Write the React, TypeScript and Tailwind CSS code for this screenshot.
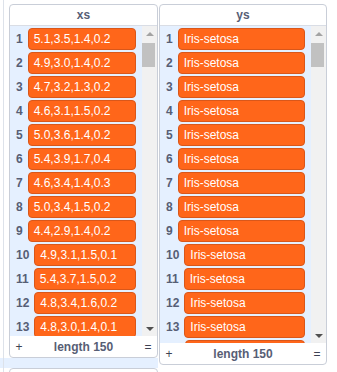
import React, { FC } from "react";

const xs = [
  "5.1,3.5,1.4,0.2",
  "4.9,3.0,1.4,0.2",
  "4.7,3.2,1.3,0.2",
  "4.6,3.1,1.5,0.2",
  "5.0,3.6,1.4,0.2",
  "5.4,3.9,1.7,0.4",
  "4.6,3.4,1.4,0.3",
  "5.0,3.4,1.5,0.2",
  "4.4,2.9,1.4,0.2",
  "4.9,3.1,1.5,0.1",
  "5.4,3.7,1.5,0.2",
  "4.8,3.4,1.6,0.2",
  "4.8,3.0,1.4,0.1",
];

const ys = Array.from({ length: 13 }, () => "Iris-setosa");

// Fake scrollbar, drawn to look like Chrome's classic one
const Scrollbar: FC = () => (
  <div className="w-[15px] shrink-0 bg-[#f1f1f1] flex flex-col">
    <div className="h-[15px] flex items-center justify-center">
      <div className="w-0 h-0 border-l-[4px] border-r-[4px] border-b-[4px] border-l-transparent border-r-transparent border-b-[#a3a3a3]" />
    </div>
    <div className="mt-[2px] w-[13px] h-[24px] bg-[#c1c1c1]" />
    <div className="flex-1" />
    <div className="h-[15px] flex items-center justify-center">
      <div className="w-0 h-0 border-l-[4px] border-r-[4px] border-t-[4px] border-l-transparent border-r-transparent border-t-[#505050]" />
    </div>
  </div>
);

type MonitorProps = {
  title: string;
  items: string[];
  width: string;
  bodyHeight: string;
  peek?: boolean;
};

const ListMonitor: FC<MonitorProps> = ({ title, items, width, bodyHeight, peek }) => (
  <div
    className={`${width} shrink-0 flex flex-col bg-white border border-[#c9ced8] rounded-[4px] overflow-hidden`}
  >
    {/* Header */}
    <div className="h-[21px] flex items-center justify-center border-b border-[#d9dde5] text-[12px] leading-[14px] font-bold text-[#575e75]">
      {title}
    </div>

    {/* List body */}
    <div className={`${bodyHeight} flex bg-[#e5f0ff]`}>
      <div className="flex-1 overflow-hidden pt-[1px]">
        {items.map((v, i) => (
          <div key={i} className="h-[24px] flex items-center pl-[6px] pr-[6px] gap-[5px]">
            <span className="text-[12px] leading-[14px] font-bold text-[#575e75]">{i + 1}</span>
            <div className="flex-1 h-[22px] flex items-center px-[5px] bg-[#ff661a] border border-[#d9571a] rounded-[4px] text-[12px] leading-[14px] text-white">
              {v}
            </div>
          </div>
        ))}
        {/* top edge of the next row, scrolled out of view */}
        {peek && (
          <div className="pt-[1px] pl-[25px] pr-[6px]">
            <div className="h-[22px] bg-[#ff661a] border border-[#d9571a] rounded-[4px]" />
          </div>
        )}
      </div>
      <Scrollbar />
    </div>

    {/* Footer */}
    <div className="h-[21px] flex items-center justify-between px-[4px] text-[12px] leading-[14px] text-[#575e75]">
      <span className="w-[10px] text-center text-[#3d4254]">+</span>
      <span className="font-bold">length 150</span>
      <span className="w-[10px] text-center text-[#3d4254]">=</span>
    </div>
  </div>
);

const App: FC = () => {
  return (
    <div
      className="w-[337px] h-[372px] overflow-hidden bg-white relative"
      style={{ fontFamily: '"Liberation Sans", Arial, sans-serif' }}
    >
      {/* faint stage edge */}
      <div className="absolute left-[3px] top-0 bottom-0 w-px bg-[#dde2ea]" />

      <div className="flex items-start gap-px pl-[9px] pt-[4px]">
        <div className="flex flex-col">
          <ListMonitor title="xs" items={xs} width="w-[149px]" bodyHeight="h-[310px]" />
          <div className="h-[10px] -ml-[9px] w-[158px] bg-[#e5f0ff]" />
          <div className="h-[20px] w-[149px] bg-white border border-[#c9ced8] rounded-t-[4px]" />
        </div>
        <ListMonitor title="ys" items={ys} width="w-[168px]" bodyHeight="h-[317px]" peek />
      </div>
    </div>
  );
};

export default App;
